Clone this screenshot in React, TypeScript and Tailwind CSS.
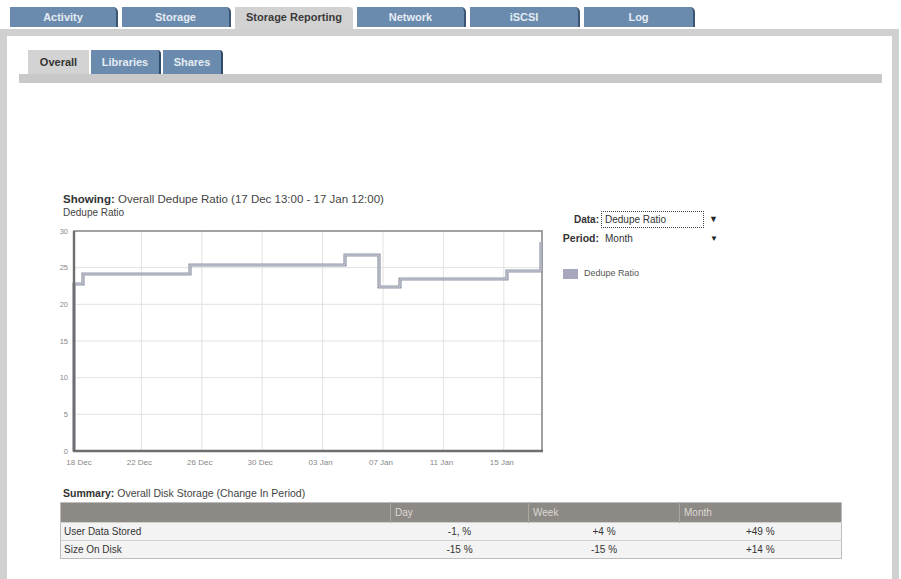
import React from 'react'

const topTabs = [
  { label: 'Activity', w: 'w-[108px]' },
  { label: 'Storage', w: 'w-[109px]' },
  { label: 'Storage Reporting', w: 'w-[118px]', active: true },
  { label: 'Network', w: 'w-[109px]' },
  { label: 'iSCSI', w: 'w-[110px]' },
  { label: 'Log', w: 'w-[111px]' },
]

const subTabs = [
  { label: 'Overall', w: 'w-[61px]', active: true },
  { label: 'Libraries', w: 'w-[70px]' },
  { label: 'Shares', w: 'w-[60px]' },
]

// chart geometry in page coordinates
const L = 74
const R = 542
const T = 232
const B = 452
const yFor = (v: number) => B - ((B - T) * v) / 30
const xTicks = ['18 Dec', '22 Dec', '26 Dec', '30 Dec', '03 Jan', '07 Jan', '11 Jan', '15 Jan']
const series = 'M74 452 V285 H83 V275 H190 V266 H345 V256 H379 V288 H400 V280 H507 V272 H541 V243'

const rows = [
  { label: 'User Data Stored', day: '-1, %', week: '+4 %', month: '+49 %' },
  { label: 'Size On Disk', day: '-15 %', week: '-15 %', month: '+14 %' },
]

function Chart() {
  return (
    <svg width={500} height={252} className="-ml-[10px] block">
      <g transform="translate(-50,-220)">
        <rect x={L} y={T} width={R - L} height={B - T} fill="#ffffff" />
        {[5, 10, 15, 20, 25].map((v) => (
          <line key={v} x1={L} x2={R} y1={yFor(v)} y2={yFor(v)} stroke="#e2e2e2" strokeWidth={1} />
        ))}
        {xTicks.map((_, i) =>
          i === 0 ? null : (
            <line key={i} x1={81 + 60.4 * i} x2={81 + 60.4 * i} y1={T} y2={B} stroke="#e2e2e2" strokeWidth={1} />
          )
        )}
        <rect x={L} y={T} width={R - L} height={B - T} fill="none" stroke="#8a8a8a" strokeWidth={1.6} />
        <path d={series} fill="none" stroke="#9298a8" strokeWidth={3.2} />
        <path d={series} fill="none" stroke="#cdd0d9" strokeWidth={1} />
        <line x1={L} x2={L} y1={T} y2={B + 1} stroke="#6e6e6e" strokeWidth={2.4} />
        <line x1={L - 1} x2={R + 1} y1={B} y2={B} stroke="#6e6e6e" strokeWidth={2.4} />
        {[0, 5, 10, 15, 20, 25, 30].map((v) => (
          <text
            key={v}
            x={68}
            y={yFor(v) + 2.5}
            textAnchor="end"
            fontSize={7.5}
            fill="#888"
            fontFamily="Liberation Sans, Arial, sans-serif"
          >
            {v}
          </text>
        ))}
        {xTicks.map((t, i) => (
          <text
            key={t}
            x={79 + 60.4 * i}
            y={466}
            textAnchor="middle"
            fontSize={8}
            fill="#888"
            fontFamily="Liberation Sans, Arial, sans-serif"
          >
            {t}
          </text>
        ))}
      </g>
    </svg>
  )
}

export default function App() {
  return (
    <div className="w-[901px] h-[579px] bg-white overflow-hidden font-['Liberation_Sans',Arial,sans-serif] flex flex-col">
      {/* Main tabs */}
      <div className="flex gap-[4px] pl-[10px] pt-[7px]">
        {topTabs.map((t) =>
          t.active ? (
            <div
              key={t.label}
              className={`${t.w} h-[22px] bg-[#d2d2d2] rounded-tr-[4px] flex items-center justify-center pb-[2px] text-[11px] font-bold text-[#3a3a3a]`}
            >
              {t.label}
            </div>
          ) : (
            <div
              key={t.label}
              className={`${t.w} h-[20px] mb-[2px] bg-[#6b8bae] border-r-2 border-[#3b5673] rounded-tr-[5px] flex items-center justify-center text-[11px] font-bold text-[#e4ebf3]`}
            >
              {t.label}
            </div>
          )
        )}
      </div>

      {/* Frame */}
      <div className="flex-1 w-[899px] border-t-[7px] border-x-[7px] border-[#d0d0d0]">
        <div className="pl-[12px] pr-[10px] pt-[14px]">
          <div className="flex gap-[2px] pl-[9px]">
            {subTabs.map((t) =>
              t.active ? (
                <div
                  key={t.label}
                  className={`${t.w} h-[24px] bg-[#d3d3d3] flex items-center justify-center text-[11px] font-bold text-[#333]`}
                >
                  {t.label}
                </div>
              ) : (
                <div
                  key={t.label}
                  className={`${t.w} h-[24px] bg-[#6b8bae] border-r-2 border-[#2f4b69] rounded-tr-[4px] flex items-center justify-center text-[11px] font-bold text-[#e4ebf3]`}
                >
                  {t.label}
                </div>
              )
            )}
          </div>
          <div className="h-[9px] bg-[#c9c9c9]" />

          {/* Report */}
          <div className="pl-[41px] pr-[41px] mt-[109px]">
            <div className="ml-[3px] text-[11.5px] leading-[14px] text-[#444]">
              <span className="font-bold text-[#333]">Showing:</span> Overall Dedupe Ratio (17 Dec 13:00 - 17 Jan 12:00)
            </div>
            <div className="flex">
              <div className="w-[495px]">
                <div className="ml-[3px] text-[10px] leading-[13px] text-[#444]">Dedupe Ratio</div>
                <Chart />
              </div>
              <div className="mt-[5px] text-[10px] text-[#333]">
                <div className="grid grid-cols-[44px_120px] gap-x-[2px] gap-y-[2px] items-center">
                  <span className="text-right font-bold">Data:</span>
                  <div className="h-[17px] flex items-center justify-between bg-white">
                    <span className="w-[103px] h-[17px] border border-dotted border-[#444] flex items-center pl-[3px]">
                      Dedupe Ratio
                    </span>
                    <span className="pr-[3px] text-[9px] text-[#222]">▼</span>
                  </div>
                  <span className="text-right font-bold text-[10.5px]">Period:</span>
                  <div className="h-[17px] flex items-center justify-between bg-white">
                    <span className="pl-[4px]">Month</span>
                    <span className="pr-[3px] text-[8px] text-[#222]">▼</span>
                  </div>
                </div>
                <div className="flex items-center gap-[6px] mt-[20px] ml-[8px]">
                  <span className="w-[15px] h-[10px] bg-[#a7a7be]" />
                  <span className="text-[9px] text-[#555]">Dedupe Ratio</span>
                </div>
              </div>
            </div>

            {/* Summary */}
            <div className="mt-[16px] ml-[3px] text-[10.5px] leading-[12px] text-[#444]">
              <span className="font-bold text-[#333]">Summary:</span> Overall Disk Storage (Change In Period)
            </div>
            <table className="mt-[3px] w-[782px] border-collapse border border-[#bdbdbd] text-[10px] text-[#333]">
              <thead>
                <tr className="h-[20px] bg-[#8d8985] text-[#dcd9d4] text-left">
                  <th className="w-[330px] font-normal border-r border-[#aaa6a2]" />
                  <th className="w-[138px] font-normal pl-[4px] border-r border-[#aaa6a2]">Day</th>
                  <th className="w-[151px] font-normal pl-[4px] border-r border-[#aaa6a2]">Week</th>
                  <th className="font-normal pl-[4px]">Month</th>
                </tr>
              </thead>
              <tbody>
                {rows.map((r) => (
                  <tr key={r.label} className="h-[18px] bg-[#f3f3f3] border-t border-[#d0d0d0]">
                    <td className="pl-[3px]">{r.label}</td>
                    <td className="text-center">{r.day}</td>
                    <td className="text-center">{r.week}</td>
                    <td className="text-center">{r.month}</td>
                  </tr>
                ))}
              </tbody>
            </table>
          </div>
        </div>
      </div>
    </div>
  )
}
